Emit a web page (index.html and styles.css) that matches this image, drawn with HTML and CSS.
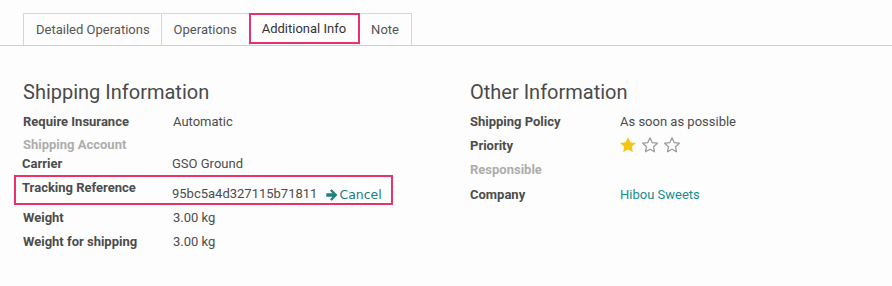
FILE: index.html
```html
<!DOCTYPE html>
<html lang="en">
<head>
  <meta charset="UTF-8" />
  <meta name="viewport" content="width=device-width, initial-scale=1.0"/>
  <title>Transfer - Additional Info</title>
  <link rel="stylesheet" href="styles.css">
</head>
<body>
  <div class="tabs">
    <div class="tab">Detailed Operations</div>
    <div class="tab">Operations</div>
    <div class="tab active">Additional Info</div>
    <div class="tab last">Note</div>
  </div>

  <div class="sheet">
    <div class="group">
      <h2>Shipping Information</h2>
      <div class="row">
        <div class="label">Require Insurance</div>
        <div class="value">Automatic</div>
      </div>
      <div class="row empty">
        <div class="label muted">Shipping Account</div>
      </div>
      <div class="row carrier">
        <div class="label">Carrier</div>
        <div class="value">GSO Ground</div>
      </div>
      <div class="row tracking">
        <div class="label">Tracking Reference</div>
        <div class="value">
          95bc5a4d327115b71811
          <a class="cancel" href="#">
            <svg width="12" height="12" viewBox="0 0 12 12"><path d="M0.3 4.3h6.2L4 1.8 5.7 0.2 11.5 6 5.7 11.8 4 10.2 6.5 7.7H0.3z" fill="currentColor"/></svg>Cancel
          </a>
        </div>
      </div>
      <div class="row">
        <div class="label">Weight</div>
        <div class="value">3.00 kg</div>
      </div>
      <div class="row">
        <div class="label">Weight for shipping</div>
        <div class="value">3.00 kg</div>
      </div>
    </div>

    <div class="group">
      <h2>Other Information</h2>
      <div class="row">
        <div class="label">Shipping Policy</div>
        <div class="value">As soon as possible</div>
      </div>
      <div class="row">
        <div class="label">Priority</div>
        <div class="value stars">
          <svg width="18" height="18" viewBox="0 0 24 24"><path d="M12 1.5l3.2 6.8 7.4.9-5.5 5.1 1.4 7.3L12 18l-6.5 3.6 1.4-7.3-5.5-5.1 7.4-.9z" fill="#f5c518"/></svg>
          <svg width="18" height="18" viewBox="0 0 24 24"><path d="M12 2.5l2.9 6.3 6.9.8-5.1 4.7 1.3 6.8L12 17.7l-6 3.4 1.3-6.8-5.1-4.7 6.9-.8z" fill="none" stroke="#999" stroke-width="1.6" stroke-linejoin="round"/></svg>
          <svg width="18" height="18" viewBox="0 0 24 24"><path d="M12 2.5l2.9 6.3 6.9.8-5.1 4.7 1.3 6.8L12 17.7l-6 3.4 1.3-6.8-5.1-4.7 6.9-.8z" fill="none" stroke="#999" stroke-width="1.6" stroke-linejoin="round"/></svg>
        </div>
      </div>
      <div class="row tall">
        <div class="label muted">Responsible</div>
      </div>
      <div class="row">
        <div class="label">Company</div>
        <div class="value"><a class="link" href="#">Hibou Sweets</a></div>
      </div>
    </div>
  </div>
</body>
</html>
```

FILE: styles.css
```css
body { margin: 0; background: #fdfdfd; color: #4c4c4c; font-family: Roboto, "Liberation Sans", sans-serif; font-size: 13px; }

.tabs { display: flex; margin-top: 13px; padding-left: 23px; border-bottom: 1px solid #cfcfcf; }
.tab { height: 31px; line-height: 31px; padding: 0 12px; border: 1px solid #d6d6d6; border-bottom: 0; margin-right: -1px; color: #555; }
.tab:first-child { padding: 0 11px 0 12px; }
.tab.active { position: relative; background: #fff; color: #333; border: 2px solid #e8336a; height: 27px; line-height: 27px; padding: 0 12px 0 11px; z-index: 1; margin-right: -1px; }
.tab.last { padding: 0 12px 0 11px; }

.sheet { display: flex; padding: 0 23px; }
.group { flex: 0 0 447px; }
.group + .group { flex: 1; }
h2 { margin: 34px 0 5px; font-size: 20px; font-weight: 400; line-height: 24px; color: #4a4a4a; }

.row { display: flex; align-items: center; height: 24px; }
.row.empty { height: 22px; }
.row.carrier { height: 16px; margin-left: -1px; margin-bottom: 4px; }
.row.tall { height: 25px; }
.label { width: 150px; flex: none; font-weight: 700; color: #4c4c4c; }
.label.muted { color: #adadad; }
.value { color: #4c4c4c; }

.row.tracking { height: 26px; width: 369px; margin-left: -9px; padding: 0 0 0 6px; border: 2px solid #e8336a; align-items: flex-start; }
.tracking .label { padding-top: 3px; }
.tracking .value { padding-top: 8px; display: flex; align-items: center; }
.cancel { display: inline-flex; align-items: center; gap: 1px; margin-left: 9px; color: #21807d; text-decoration: none; font-family: "DejaVu Sans", sans-serif; font-size: 12.5px; padding-top: 2px; }

.stars { display: flex; gap: 4px; margin-left: -1px; }
.link { color: #1a8c89; text-decoration: none; }
```
